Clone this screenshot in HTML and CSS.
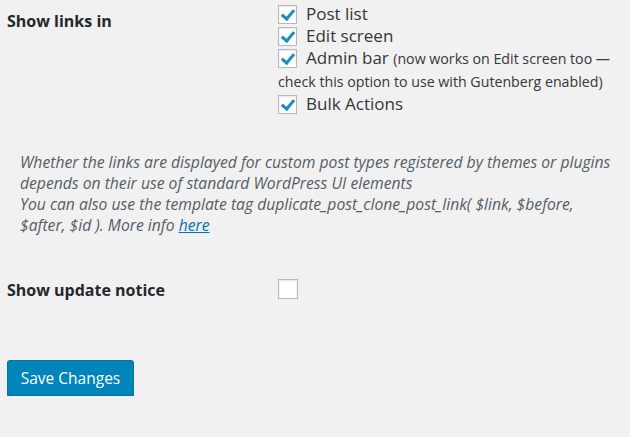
FILE: index.html
```html
<!DOCTYPE html>
<html lang="en">
<head>
    <meta charset="UTF-8">
    <meta name="viewport" content="width=device-width, initial-scale=1.0">
    <title>Duplicate Post Settings</title>
    <link rel="stylesheet" href="styles.css">
</head>
<body>
    <form class="settings">
        <!-- Show links in -->
        <div class="row row-links">
            <div class="row-label">Show links in</div>
            <div class="row-field">
                <label class="option"><span class="box checked"></span>Post list</label>
                <label class="option"><span class="box checked"></span>Edit screen</label>
                <label class="option"><span class="box checked"></span>Admin bar <small>(now works on Edit screen too —<br>check this option to use with Gutenberg enabled)</small></label>
                <label class="option"><span class="box checked"></span>Bulk Actions</label>
            </div>
        </div>

        <p class="description">
            Whether the links are displayed for custom post types registered by themes or plugins<br>
            depends on their use of standard WordPress UI elements<br>
            You can also use the template tag duplicate_post_clone_post_link( $link, $before,<br>
            $after, $id ). More info <a href="#">here</a>
        </p>

        <!-- Show update notice -->
        <div class="row row-notice">
            <div class="row-label">Show update notice</div>
            <div class="row-field">
                <span class="box"></span>
            </div>
        </div>

        <button type="button" class="button-primary">Save Changes</button>
    </form>
</body>
</html>
```

FILE: styles.css
```css
/* General */
body {
    margin: 0;
    padding: 0;
    background-color: #f1f1f1;
    color: #32373c;
    font-family: "Open Sans", sans-serif;
}

.settings {
    padding: 0 0 0 7px;
}

/* Form rows */
.row {
    display: grid;
    grid-template-columns: 271px 1fr;
}

.row-label {
    font-weight: bold;
    font-size: 16px;
    color: #23282d;
}

.row-links {
    padding-top: 3px;
}

.row-links .row-label {
    padding-top: 7px;
    line-height: 22px;
}

.option {
    display: block;
    font-size: 17px;
    line-height: 22px;
    white-space: nowrap;
}

.option small {
    font-size: 14.2px;
}

/* Checkboxes */
.box {
    display: inline-block;
    box-sizing: border-box;
    width: 19px;
    height: 19px;
    border: 1px solid #b4b9be;
    background-color: #fff;
    box-shadow: inset 0 1px 2px rgba(0, 0, 0, 0.1);
    vertical-align: -4px;
    margin-right: 9px;
    position: relative;
}

.box.checked::after {
    content: "";
    position: absolute;
    left: 5px;
    top: 1px;
    width: 5px;
    height: 10px;
    border: solid #1e8cbe;
    border-width: 0 3px 3px 0;
    transform: rotate(40deg);
}

/* Description */
.description {
    margin: 37px 0 0 13px;
    font-style: italic;
    font-size: 15.7px;
    line-height: 21px;
    color: #555d66;
    white-space: nowrap;
}

.description a {
    color: #0073aa;
}

.row-notice {
    margin-top: 43px;
    line-height: 22px;
}

.row-notice .box {
    width: 20px;
    height: 20px;
    vertical-align: -3px;
}

/* Button */
.button-primary {
    display: block;
    margin-top: 59px;
    width: 127px;
    height: 36px;
    background-color: #0085ba;
    border: 1px solid #0073aa;
    border-radius: 3px;
    box-shadow: 0 1px 0 #006799;
    color: #fff;
    font-family: "Open Sans", sans-serif;
    font-size: 15.5px;
    cursor: pointer;
}
```
